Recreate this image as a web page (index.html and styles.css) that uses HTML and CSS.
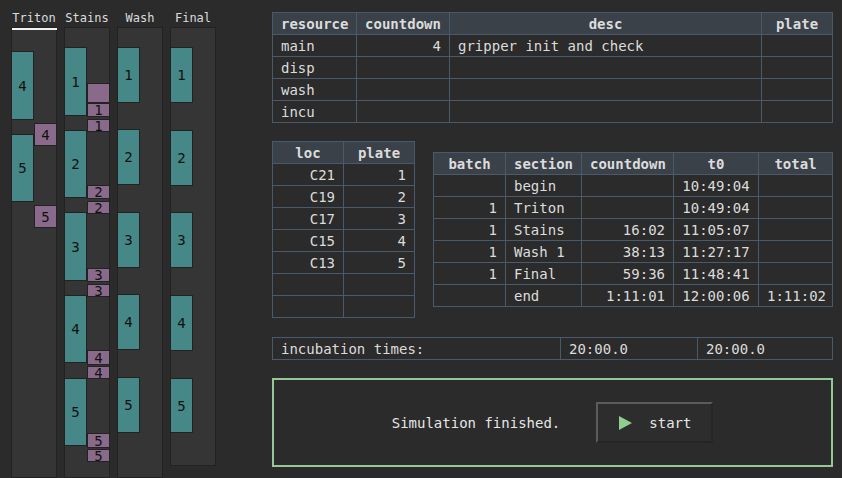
FILE: index.html
```html
<!DOCTYPE html>
<html>
<head>
<meta charset="utf-8">
<link rel="stylesheet" href="styles.css">
</head>
<body>
<div class="app">
  <div class="gantt">
    <div class="lane">
      <div class="lane-label active">Triton</div>
      <div class="track tall">
        <div class="blk teal" style="top:24px;height:69px">4</div>
        <div class="blk pur" style="top:96px;height:23px">4</div>
        <div class="blk teal" style="top:107px;height:68px">5</div>
        <div class="blk pur" style="top:178px;height:23px">5</div>
      </div>
    </div>
    <div class="lane">
      <div class="lane-label">Stains</div>
      <div class="track tall">
        <div class="blk teal" style="top:20px;height:69px">1</div>
        <div class="blk pur" style="top:56px;height:20px"></div>
        <div class="blk pur" style="top:76px;height:14px">1</div>
        <div class="blk pur" style="top:92px;height:13px">1</div>
        <div class="blk teal" style="top:103px;height:68px">2</div>
        <div class="blk pur" style="top:158px;height:14px">2</div>
        <div class="blk pur" style="top:174px;height:13px">2</div>
        <div class="blk teal" style="top:185px;height:69px">3</div>
        <div class="blk pur" style="top:241px;height:14px">3</div>
        <div class="blk pur" style="top:257px;height:13px">3</div>
        <div class="blk teal" style="top:268px;height:68px">4</div>
        <div class="blk pur" style="top:323px;height:15px">4</div>
        <div class="blk pur" style="top:339px;height:13px">4</div>
        <div class="blk teal" style="top:351px;height:68px">5</div>
        <div class="blk pur" style="top:406px;height:15px">5</div>
        <div class="blk pur" style="top:422px;height:13px">5</div>
      </div>
    </div>
    <div class="lane">
      <div class="lane-label">Wash</div>
      <div class="track tall">
        <div class="blk teal" style="top:20px;height:56px">1</div>
        <div class="blk teal" style="top:102px;height:56px">2</div>
        <div class="blk teal" style="top:185px;height:56px">3</div>
        <div class="blk teal" style="top:267px;height:56px">4</div>
        <div class="blk teal" style="top:350px;height:56px">5</div>
      </div>
    </div>
    <div class="lane">
      <div class="lane-label">Final</div>
      <div class="track short">
        <div class="blk teal" style="top:20px;height:56px">1</div>
        <div class="blk teal" style="top:103px;height:56px">2</div>
        <div class="blk teal" style="top:185px;height:56px">3</div>
        <div class="blk teal" style="top:268px;height:56px">4</div>
        <div class="blk teal" style="top:351px;height:55px">5</div>
      </div>
    </div>
  </div>

  <div class="panel">
    <table class="grid res">
      <colgroup><col style="width:84px"><col style="width:93px"><col style="width:312px"><col style="width:71px"></colgroup>
      <thead><tr><th>resource</th><th>countdown</th><th>desc</th><th>plate</th></tr></thead>
      <tbody>
        <tr><td>main</td><td class="r">4</td><td>gripper init and check</td><td></td></tr>
        <tr><td>disp</td><td></td><td></td><td></td></tr>
        <tr><td>wash</td><td></td><td></td><td></td></tr>
        <tr><td>incu</td><td></td><td></td><td></td></tr>
      </tbody>
    </table>

    <div class="mid">
      <table class="grid loc">
        <colgroup><col style="width:71px"><col style="width:71px"></colgroup>
        <thead><tr><th>loc</th><th>plate</th></tr></thead>
        <tbody>
          <tr><td class="r">C21</td><td class="r">1</td></tr>
          <tr><td class="r">C19</td><td class="r">2</td></tr>
          <tr><td class="r">C17</td><td class="r">3</td></tr>
          <tr><td class="r">C15</td><td class="r">4</td></tr>
          <tr><td class="r">C13</td><td class="r">5</td></tr>
          <tr><td></td><td></td></tr>
          <tr><td></td><td></td></tr>
        </tbody>
      </table>

      <table class="grid batch">
        <colgroup><col style="width:72px"><col style="width:76px"><col style="width:92px"><col style="width:85px"><col style="width:74px"></colgroup>
        <thead><tr><th>batch</th><th>section</th><th>countdown</th><th>t0</th><th>total</th></tr></thead>
        <tbody>
          <tr><td></td><td>begin</td><td></td><td class="c">10:49:04</td><td></td></tr>
          <tr><td class="r">1</td><td>Triton</td><td></td><td class="c">10:49:04</td><td></td></tr>
          <tr><td class="r">1</td><td>Stains</td><td class="r">16:02</td><td class="c">11:05:07</td><td></td></tr>
          <tr><td class="r">1</td><td>Wash 1</td><td class="r">38:13</td><td class="c">11:27:17</td><td></td></tr>
          <tr><td class="r">1</td><td>Final</td><td class="r">59:36</td><td class="c">11:48:41</td><td></td></tr>
          <tr><td></td><td>end</td><td class="r">1:11:01</td><td class="c">12:00:06</td><td class="c">1:11:02</td></tr>
        </tbody>
      </table>
    </div>

    <table class="grid incu">
      <colgroup><col style="width:288px"><col style="width:137px"><col style="width:135px"></colgroup>
      <tbody><tr><td>incubation times:</td><td>20:00.0</td><td>20:00.0</td></tr></tbody>
    </table>

    <div class="status">
      <span class="msg">Simulation finished.</span>
      <button class="start"><svg class="play" width="13" height="14" viewBox="0 0 13 14"><polygon points="0,0 13,7 0,14" fill="#8fce8f"/></svg><span>start</span></button>
    </div>
  </div>
</div>
</body>
</html>
```

FILE: styles.css
```css
html, body {
  margin: 0;
  padding: 0;
  background: #2b2b2b;
  font-family: "DejaVu Sans Mono", "Liberation Mono", monospace;
  color: #dcdcdc;
}
.app {
  display: flex;
  height: 478px;
  overflow: hidden;
}
.gantt {
  display: flex;
  gap: 7px;
  padding: 10px 0 0 11px;
  width: 261px;
  flex: none;
}
.lane {
  width: 46px;
  display: flex;
  flex-direction: column;
}
.lane-label {
  position: relative;
  height: 17px;
  line-height: 17px;
  font-size: 12px;
  text-align: center;
  color: #dcdcdc;
}
.lane-label.active::after {
  content: "";
  position: absolute;
  left: 1px;
  right: 0;
  bottom: -3px;
  height: 2px;
  background: #f2f2f2;
  z-index: 2;
}
.track {
  position: relative;
  background: #353535;
  box-shadow: inset 0 0 0 1px #222;
}
.track.tall { height: 470px; }
.track.short { height: 439px; }
.blk {
  position: absolute;
  box-sizing: border-box;
  width: 50%;
  border: 1px solid #222;
  display: flex;
  align-items: center;
  justify-content: center;
  font-size: 14px;
  line-height: 14px;
  color: #111;
}
.blk.teal { left: 0; background: #458887; }
.blk.pur { right: 0; background: #8a6a8a; }

.panel {
  padding-top: 12px;
  width: 561px;
  display: flex;
  flex-direction: column;
  font-size: 14px;
}
.grid {
  border-collapse: collapse;
  table-layout: fixed;
  border: 1px solid #4b5a6b;
}
.grid th, .grid td {
  border: 1px solid #4b5a6b;
  padding: 0 8px;
  height: 21px;
  line-height: 20px;
  white-space: nowrap;
  overflow: hidden;
  text-align: left;
  font-weight: normal;
}
.grid th {
  background: #3a4149;
  font-weight: bold;
  text-align: center;
}
.grid td.r { text-align: right; }
.grid td.c { text-align: center; }
.res { width: 561px; }
.mid {
  display: flex;
  align-items: flex-start;
  gap: 18px;
  margin-top: 18px;
}
.loc { width: 143px; }
.batch { width: 400px; margin-top: 11px; }
.incu { width: 561px; margin-top: 19px; }
.status {
  margin-top: 18px;
  height: 89px;
  box-sizing: border-box;
  border: 2px solid #94c894;
  display: flex;
  align-items: center;
  justify-content: center;
  gap: 36px;
}
.msg { font-size: 14px; color: #e6e6e6; }
.start {
  width: 117px;
  height: 41px;
  box-sizing: border-box;
  background: #2d2d2d;
  border: 2px solid;
  border-color: #5c5c5c #262626 #262626 #5c5c5c;
  display: flex;
  align-items: center;
  padding: 0 0 0 21px;
  gap: 17px;
  font-family: inherit;
  font-size: 14px;
  color: #e6e6e6;
}
.play { display: block; }
```
